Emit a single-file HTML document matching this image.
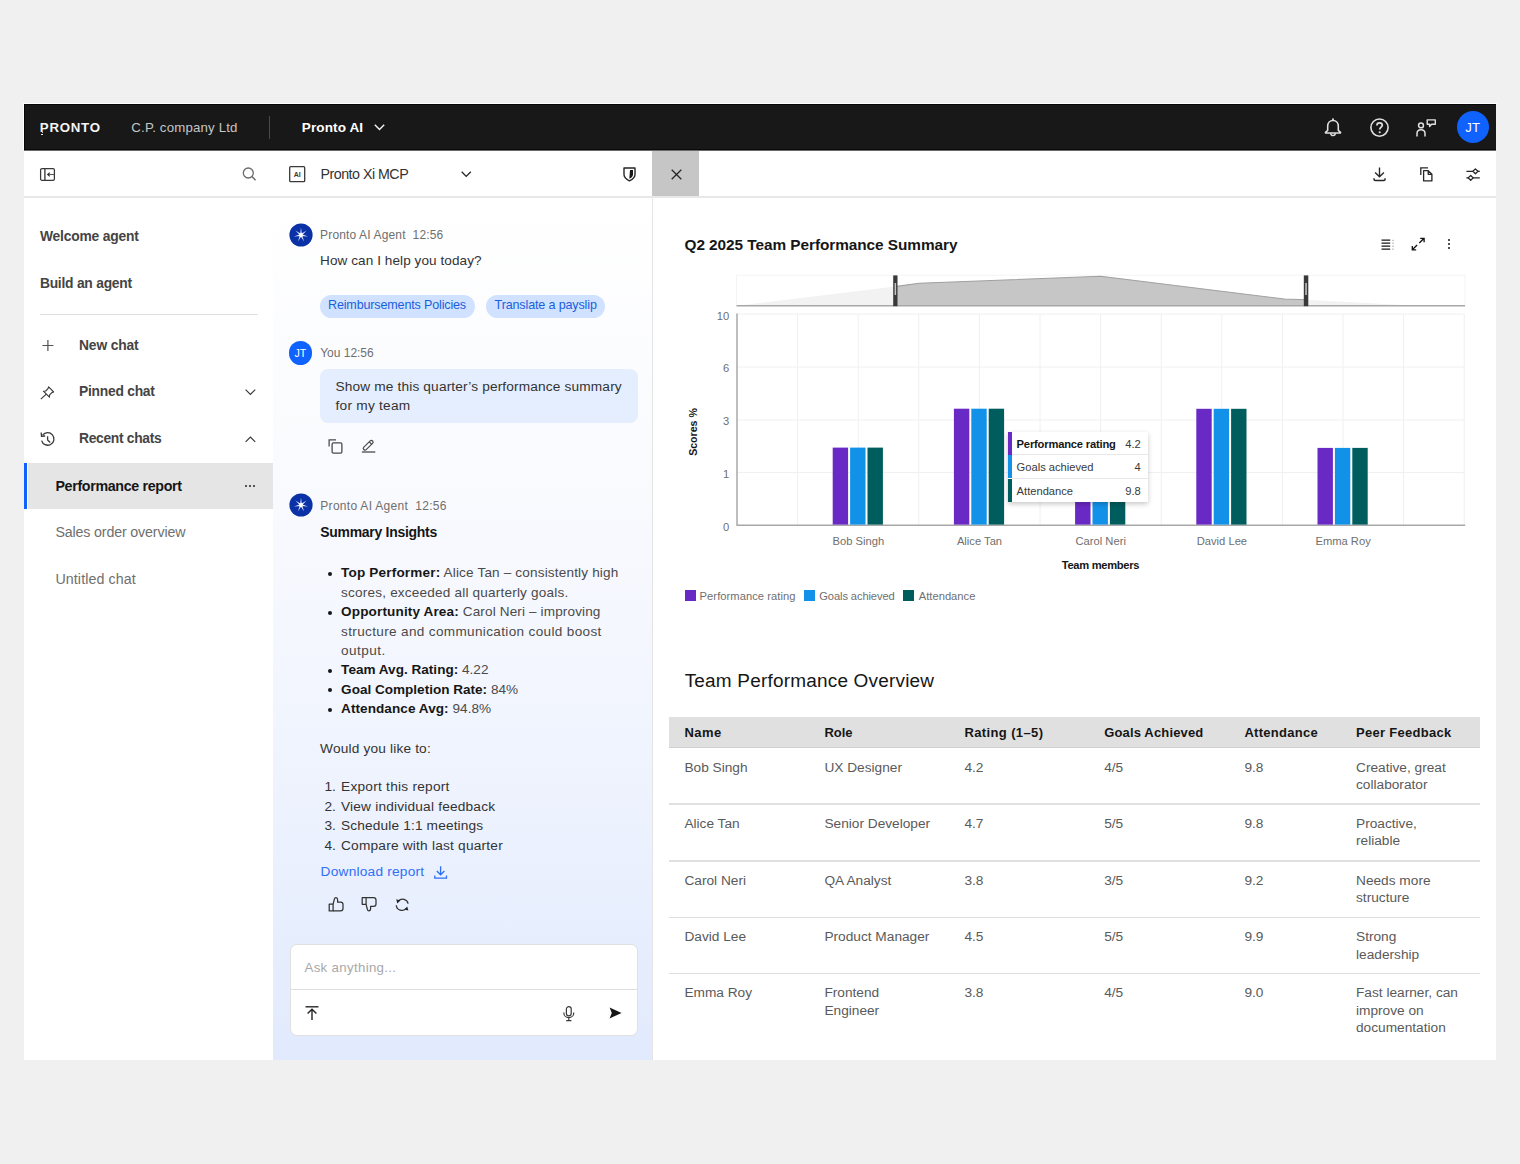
<!DOCTYPE html>
<html><head><meta charset="utf-8"><title>Pronto AI</title>
<style>
html,body{margin:0;padding:0;}
body{width:1520px;height:1164px;background:#f0f0f0;position:relative;overflow:hidden;font-family:"Liberation Sans",sans-serif;}
.t{position:absolute;white-space:nowrap;}
.r{position:absolute;}
svg.r{overflow:visible;}
</style></head><body>
<div class="r" style="left:24px;top:104px;width:1472px;height:956px;background:#ffffff;"></div>
<div class="r" style="left:23px;top:103px;width:1474px;height:1px;background:#ffffff;"></div>
<div class="r" style="left:23px;top:103px;width:1px;height:47px;background:#ffffff;"></div>
<div class="r" style="left:24px;top:104px;width:1472px;height:46px;background:#181818;"></div>
<div class="r" style="left:24px;top:104px;width:1472px;height:1px;background:#070707;"></div>
<div class="r" style="left:24px;top:149px;width:1472px;height:1px;background:#0a0a0a;"></div>
<div class="r" style="left:24px;top:150px;width:1472px;height:1px;background:#6a6a6a;"></div>
<div class="r" style="left:24px;top:104px;width:1px;height:46px;background:#070707;"></div>
<div class="t" style="left:39.80px;top:121.07px;font-size:13.27px;line-height:13.27px;color:#f4f4f4;font-weight:700;letter-spacing:0.740px;">PRONTO</div>
<div class="r" style="left:41.5px;top:132px;width:1.5px;height:1px;background:#bdbdbd;"></div>
<div class="r" style="left:41.2px;top:133.6px;width:2.1999999999999957px;height:1.8000000000000114px;background:#e8e8e8;"></div>
<div class="t" style="left:131.30px;top:120.77px;font-size:13.27px;line-height:13.27px;color:#c6c6c6;letter-spacing:0.160px;">C.P. company Ltd</div>
<div class="r" style="left:269px;top:116px;width:1.3000000000000114px;height:22.5px;background:#4a4a4a;"></div>
<div class="t" style="left:301.80px;top:120.93px;font-size:13.55px;line-height:13.55px;color:#ffffff;font-weight:700;letter-spacing:0.100px;">Pronto AI</div>
<svg class="r" style="left:374px;top:124px;" width="11" height="7" viewBox="0 0 11 7"><path d="M0.8 0.8 L5.5 5.6 L10.2 0.8" fill="none" stroke="#f4f4f4" stroke-width="1.4"/></svg>
<svg class="r" style="left:1323.5px;top:118px;" width="18" height="19" viewBox="0 0 18 19"><circle cx="9" cy="1.3" r="1" fill="#e0e0e0"/><path d="M3.7 12.4 L3.7 8.3 C3.7 4.7 6 2.5 9 2.5 C12 2.5 14.3 4.7 14.3 8.3 L14.3 12.4 L16.5 14.4 L16.5 15 L1.5 15 L1.5 14.4 Z" fill="none" stroke="#e0e0e0" stroke-width="1.55" stroke-linejoin="round"/><path d="M6.7 15.3 A2.3 2.3 0 0 0 11.3 15.3" fill="none" stroke="#e0e0e0" stroke-width="1.5"/></svg>
<svg class="r" style="left:1369.5px;top:118px;" width="20" height="20" viewBox="0 0 20 20"><circle cx="9.5" cy="9.6" r="8.6" fill="none" stroke="#e0e0e0" stroke-width="1.6"/><path d="M6.9 7.4 C6.9 5.7 8 4.8 9.6 4.8 C11.2 4.8 12.3 5.8 12.3 7.3 C12.3 9.1 9.7 9.4 9.7 11.6" fill="none" stroke="#e0e0e0" stroke-width="1.7"/><circle cx="9.7" cy="14.3" r="1.05" fill="#e0e0e0"/></svg>
<svg class="r" style="left:1416px;top:119px;" width="21" height="18" viewBox="0 0 21 18"><circle cx="5" cy="6.4" r="2.45" fill="none" stroke="#e0e0e0" stroke-width="1.5"/><path d="M1 17.4 L1 14.6 C1 12.1 2.8 10.7 5 10.7 C7.2 10.7 9 12.1 9 14.6 L9 17.4" fill="none" stroke="#e0e0e0" stroke-width="1.5"/><path d="M11.2 0.9 L19.3 0.9 L19.3 5.3 L15.6 5.3 L13.6 7.4 L13.6 5.3 L11.2 5.3 Z" fill="none" stroke="#e0e0e0" stroke-width="1.4" stroke-linejoin="round"/></svg>
<div class="r" style="left:1456.5px;top:111px;width:32px;height:32px;border-radius:50%;background:#0f62fe;"></div>
<div class="t" style="left:1465.20px;top:120.89px;font-size:13.13px;line-height:13.13px;color:#ffffff;letter-spacing:0.200px;">JT</div>
<div class="r" style="left:24px;top:196px;width:1472px;height:2px;background:#e8e8e8;"></div>
<div class="r" style="left:651.5px;top:198px;width:1.5px;height:862px;background:#e4e4e4;"></div>
<div class="r" style="left:652px;top:151px;width:47px;height:45px;background:#c6c6c6;"></div>
<svg class="r" style="left:670.5px;top:168.5px;" width="11" height="11" viewBox="0 0 11 11"><path d="M0.7 0.7 L10.3 10.3 M10.3 0.7 L0.7 10.3" stroke="#262626" stroke-width="1.3"/></svg>
<svg class="r" style="left:40px;top:167.5px;" width="15" height="13" viewBox="0 0 15 13"><rect x="0.6" y="0.6" width="13.8" height="11.7" rx="1.4" fill="none" stroke="#393939" stroke-width="1.25"/><path d="M4.9 0.6 L4.9 12.3" stroke="#393939" stroke-width="1.35"/><path d="M6.9 6.5 L9.7 3.9 L9.7 9.1 Z" fill="#2a2a2a"/><path d="M9.3 6.5 L14 6.5" stroke="#5a5a5a" stroke-width="1.1"/></svg>
<svg class="r" style="left:242px;top:166.5px;" width="15" height="14" viewBox="0 0 15 14"><circle cx="6.3" cy="6" r="5" fill="none" stroke="#6a6a6a" stroke-width="1.3"/><path d="M9.9 9.6 L13.6 13.2" stroke="#6a6a6a" stroke-width="1.4"/></svg>
<svg class="r" style="left:288.5px;top:166px;" width="16.5" height="16.5" viewBox="0 0 16.5 16.5"><rect x="0.7" y="0.7" width="15" height="15" rx="1" fill="none" stroke="#393939" stroke-width="1.3"/><text x="8.2" y="11" font-family="Liberation Sans" font-weight="700" font-size="7" text-anchor="middle" fill="#393939">AI</text></svg>
<div class="t" style="left:320.50px;top:166.94px;font-size:14.25px;line-height:14.25px;color:#333333;letter-spacing:-0.508px;">Pronto Xi MCP</div>
<svg class="r" style="left:461px;top:171px;" width="10.5" height="6.5" viewBox="0 0 10.5 6.5"><path d="M0.7 0.7 L5.2 5.4 L9.8 0.7" fill="none" stroke="#262626" stroke-width="1.3"/></svg>
<svg class="r" style="left:623px;top:166.5px;" width="13" height="14.5" viewBox="0 0 13 14.5"><path d="M1 1 L12 1 L12 7.5 C12 10.8 9 12.6 6.5 13.8 C4 12.6 1 10.8 1 7.5 Z" fill="none" stroke="#262626" stroke-width="1.4" stroke-linejoin="round"/><path d="M7 3 L10 3 L10 7.5 C10 9.5 8.5 10.7 6.3 11.8 Z" fill="#161616"/></svg>
<svg class="r" style="left:1372.5px;top:167px;" width="13.5" height="14.5" viewBox="0 0 13.5 14.5"><path d="M6.5 0.4 L6.5 9.6 M2.1 5.6 L6.5 9.8 L10.9 5.6" fill="none" stroke="#262626" stroke-width="1.35"/><path d="M1 11.3 L1 12.2 Q1 13.4 2.4 13.4 L10.7 13.4 Q12.1 13.4 12.1 12.2 L12.1 11.3" fill="none" stroke="#262626" stroke-width="1.45"/></svg>
<svg class="r" style="left:1419.5px;top:166.5px;" width="13" height="15" viewBox="0 0 13 15"><path d="M0.8 8 L0.8 0.8 L8 0.8" fill="none" stroke="#262626" stroke-width="1.3"/><path d="M3.6 3.6 L8.2 3.6 L11.9 7.3 L11.9 13.9 L3.6 13.9 Z M8.2 3.6 L8.2 7.3 L11.9 7.3" fill="none" stroke="#262626" stroke-width="1.3" stroke-linejoin="round"/></svg>
<svg class="r" style="left:1465.5px;top:167.5px;" width="14.5" height="13" viewBox="0 0 14.5 13"><path d="M0.4 3.3 L13.8 3.3 M0.4 9.9 L13.8 9.9" stroke="#262626" stroke-width="1.35"/><path d="M6.9 3.3 L9.4 0.9 L11.9 3.3 L9.4 5.7 Z" fill="#fff" stroke="#262626" stroke-width="1.3" stroke-linejoin="round"/><path d="M2.2 9.9 L4.7 7.5 L7.2 9.9 L4.7 12.3 Z" fill="#fff" stroke="#262626" stroke-width="1.3" stroke-linejoin="round"/></svg>
<div class="t" style="left:39.90px;top:229.70px;font-size:13.83px;line-height:13.83px;color:#444444;font-weight:700;letter-spacing:-0.183px;">Welcome agent</div>
<div class="t" style="left:39.90px;top:276.50px;font-size:13.83px;line-height:13.83px;color:#444444;font-weight:700;letter-spacing:-0.231px;">Build an agent</div>
<div class="r" style="left:40px;top:313.5px;width:218px;height:1.5px;background:#e0e0e0;"></div>
<div class="t" style="left:79.00px;top:338.80px;font-size:13.83px;line-height:13.83px;color:#444444;font-weight:700;letter-spacing:-0.143px;">New chat</div>
<div class="t" style="left:79.00px;top:384.90px;font-size:13.83px;line-height:13.83px;color:#444444;font-weight:700;letter-spacing:-0.250px;">Pinned chat</div>
<div class="t" style="left:79.00px;top:432.00px;font-size:13.83px;line-height:13.83px;color:#444444;font-weight:700;letter-spacing:-0.309px;">Recent chats</div>
<svg class="r" style="left:41.5px;top:340px;" width="12" height="11" viewBox="0 0 12 11"><path d="M5.9 0 L5.9 11 M0.4 5.5 L11.4 5.5" stroke="#525252" stroke-width="1.2"/></svg>
<svg class="r" style="left:40px;top:385.5px;" width="14.5" height="13.5" viewBox="0 0 14.5 13.5"><path d="M8.6 0.9 L13.6 5.9 L11.9 6.6 L9.6 8.9 L9.4 11.2 L3.4 5.2 L5.7 5 L8 2.7 Z" fill="none" stroke="#393939" stroke-width="1.15" stroke-linejoin="round"/><path d="M6.3 8.1 L0.8 13.1" stroke="#393939" stroke-width="1.15"/></svg>
<svg class="r" style="left:244.5px;top:389px;" width="11" height="6.5" viewBox="0 0 11 6.5"><path d="M0.6 0.6 L5.4 5.4 L10.2 0.6" fill="none" stroke="#393939" stroke-width="1.2"/></svg>
<svg class="r" style="left:244.5px;top:436px;" width="11" height="6.5" viewBox="0 0 11 6.5"><path d="M0.6 5.8 L5.4 1 L10.2 5.8" fill="none" stroke="#393939" stroke-width="1.2"/></svg>
<svg class="r" style="left:39.5px;top:431.5px;" width="15.5" height="15" viewBox="0 0 15.5 15"><path d="M2.6 3.2 A6.3 6.3 0 1 1 1.6 8.6" fill="none" stroke="#393939" stroke-width="1.3"/><path d="M1.2 0.5 L1.5 4.2 L5.2 4" fill="none" stroke="#393939" stroke-width="1.3"/><path d="M7.6 4.2 L7.6 8 L10.2 10.4" fill="none" stroke="#393939" stroke-width="1.3"/></svg>
<div class="r" style="left:24px;top:462.5px;width:3.1999999999999993px;height:46.5px;background:#0f62fe;"></div>
<div class="r" style="left:28px;top:462.5px;width:245px;height:46.5px;background:#e5e5e5;"></div>
<div class="t" style="left:55.40px;top:478.84px;font-size:14.25px;line-height:14.25px;color:#161616;font-weight:700;letter-spacing:-0.329px;">Performance report</div>
<div class="r" style="left:245.30px;top:484.7px;width:2.2px;height:2.2px;border-radius:50%;background:#262626"></div>
<div class="r" style="left:249.10px;top:484.7px;width:2.2px;height:2.2px;border-radius:50%;background:#262626"></div>
<div class="r" style="left:252.90px;top:484.7px;width:2.2px;height:2.2px;border-radius:50%;background:#262626"></div>
<div class="t" style="left:55.40px;top:525.44px;font-size:14.25px;line-height:14.25px;color:#6f6f6f;letter-spacing:-0.158px;">Sales order overview</div>
<div class="t" style="left:55.40px;top:571.54px;font-size:14.25px;line-height:14.25px;color:#6f6f6f;letter-spacing:0.100px;">Untitled chat</div>
<div class="r" style="left:273px;top:198px;width:378.5px;height:862px;background:linear-gradient(to bottom,#ffffff 0%,#f9fafe 35%,#f1f5fe 60%,#e1eafd 100%);"></div>
<svg class="r" style="left:288.7px;top:222.8px;" width="24" height="24" viewBox="0 0 24 24"><circle cx="12" cy="12" r="11.6" fill="#0a31a6"/><path d="M13.00 12.00 L12.00 4.80 L11.00 12.00 Z" fill="#dfe6ff"/><path d="M12.62 12.78 L17.63 7.51 L11.38 11.22 Z" fill="#dfe6ff"/><path d="M11.78 12.97 L19.02 13.60 L12.22 11.03 Z" fill="#dfe6ff"/><path d="M11.10 12.43 L15.12 18.49 L12.90 11.57 Z" fill="#dfe6ff"/><path d="M11.10 11.57 L8.88 18.49 L12.90 12.43 Z" fill="#dfe6ff"/><path d="M11.78 11.03 L4.98 13.60 L12.22 12.97 Z" fill="#dfe6ff"/><path d="M12.62 11.22 L6.37 7.51 L11.38 12.78 Z" fill="#dfe6ff"/><circle cx="12" cy="12" r="1.9" fill="#ffffff"/></svg>
<div class="t" style="left:320.10px;top:228.53px;font-size:12.01px;line-height:12.01px;color:#6f6f6f;letter-spacing:0.143px;">Pronto AI Agent  12:56</div>
<div class="t" style="left:320.10px;top:254.23px;font-size:13.55px;line-height:13.55px;color:#333333;letter-spacing:0.075px;">How can I help you today?</div>
<div class="r" style="left:319.8px;top:294.8px;width:155px;height:23.2px;border-radius:12px;background:#d0e2ff;"></div>
<div class="r" style="left:486.4px;top:294.8px;width:119px;height:23.2px;border-radius:12px;background:#d0e2ff;"></div>
<div class="t" style="left:328.00px;top:299.26px;font-size:12.57px;line-height:12.57px;color:#1a5fdc;letter-spacing:-0.164px;">Reimbursements Policies</div>
<div class="t" style="left:494.60px;top:299.26px;font-size:12.57px;line-height:12.57px;color:#1a5fdc;letter-spacing:-0.150px;">Translate a payslip</div>
<div class="r" style="left:288.5px;top:341px;width:23.6px;height:23.6px;border-radius:50%;background:#0f62fe;"></div>
<div class="t" style="left:294.60px;top:348.41px;font-size:10.61px;line-height:10.61px;color:#ffffff;letter-spacing:-0.200px;">JT</div>
<div class="t" style="left:320.20px;top:347.23px;font-size:12.01px;line-height:12.01px;color:#6f6f6f;letter-spacing:-0.013px;">You 12:56</div>
<div class="r" style="left:320.2px;top:368.6px;width:318px;height:54.5px;border-radius:8px;background:#e5eefe;"></div>
<div class="t" style="left:335.50px;top:379.91px;font-size:13.69px;line-height:13.69px;color:#333333;letter-spacing:0.146px;">Show me this quarter’s performance summary</div>
<div class="t" style="left:335.50px;top:398.91px;font-size:13.69px;line-height:13.69px;color:#333333;letter-spacing:0.240px;">for my team</div>
<svg class="r" style="left:328px;top:439px;" width="15" height="15" viewBox="0 0 15 15"><path d="M1.1 7.6 L1.1 0.9 L8 0.9" fill="none" stroke="#4a4a4a" stroke-width="1.25"/><rect x="4.1" y="3.9" width="9.8" height="10.2" rx="1.4" fill="none" stroke="#4a4a4a" stroke-width="1.3"/></svg>
<svg class="r" style="left:361px;top:439px;" width="15" height="15" viewBox="0 0 15 15"><g transform="rotate(-44 7.2 6.25)"><rect x="1.05" y="4.55" width="12.3" height="3.4" rx="1.7" fill="none" stroke="#4a4a4a" stroke-width="1.2"/><path d="M10.4 4.55 L10.4 7.95" stroke="#4a4a4a" stroke-width="1.1"/></g><path d="M0.9 13 L14.3 13" stroke="#4a4a4a" stroke-width="1.3"/></svg>
<svg class="r" style="left:288.9px;top:493.3px;" width="24" height="24" viewBox="0 0 24 24"><circle cx="12" cy="12" r="11.6" fill="#0a31a6"/><path d="M13.00 12.00 L12.00 4.80 L11.00 12.00 Z" fill="#dfe6ff"/><path d="M12.62 12.78 L17.63 7.51 L11.38 11.22 Z" fill="#dfe6ff"/><path d="M11.78 12.97 L19.02 13.60 L12.22 11.03 Z" fill="#dfe6ff"/><path d="M11.10 12.43 L15.12 18.49 L12.90 11.57 Z" fill="#dfe6ff"/><path d="M11.10 11.57 L8.88 18.49 L12.90 12.43 Z" fill="#dfe6ff"/><path d="M11.78 11.03 L4.98 13.60 L12.22 12.97 Z" fill="#dfe6ff"/><path d="M12.62 11.22 L6.37 7.51 L11.38 12.78 Z" fill="#dfe6ff"/><circle cx="12" cy="12" r="1.9" fill="#ffffff"/></svg>
<div class="t" style="left:320.30px;top:499.73px;font-size:12.01px;line-height:12.01px;color:#6f6f6f;letter-spacing:0.290px;">Pronto AI Agent  12:56</div>
<div class="t" style="left:320.30px;top:525.78px;font-size:13.97px;line-height:13.97px;color:#161616;font-weight:700;letter-spacing:-0.280px;">Summary Insights</div>
<div class="r" style="left:328.2px;top:571.80px;width:4px;height:4px;border-radius:50%;background:#161616"></div>
<div class="t" style="left:341.10px;top:566.33px;font-size:13.55px;line-height:13.55px;color:#4a4a4a;letter-spacing:0.171px;"><span style="color:#161616;font-weight:700;">Top Performer:</span><span style="color:#4a4a4a;"> Alice Tan – consistently high</span></div>
<div class="t" style="left:341.10px;top:585.75px;font-size:13.55px;line-height:13.55px;color:#4a4a4a;letter-spacing:0.201px;"><span style="color:#4a4a4a;">scores, exceeded all quarterly goals.</span></div>
<div class="r" style="left:328.2px;top:610.64px;width:4px;height:4px;border-radius:50%;background:#161616"></div>
<div class="t" style="left:341.10px;top:605.17px;font-size:13.55px;line-height:13.55px;color:#4a4a4a;letter-spacing:0.138px;"><span style="color:#161616;font-weight:700;">Opportunity Area:</span><span style="color:#4a4a4a;"> Carol Neri – improving</span></div>
<div class="t" style="left:341.10px;top:624.59px;font-size:13.55px;line-height:13.55px;color:#4a4a4a;letter-spacing:0.348px;"><span style="color:#4a4a4a;">structure and communication could boost</span></div>
<div class="t" style="left:341.10px;top:644.01px;font-size:13.55px;line-height:13.55px;color:#4a4a4a;letter-spacing:0.461px;"><span style="color:#4a4a4a;">output.</span></div>
<div class="r" style="left:328.2px;top:668.90px;width:4px;height:4px;border-radius:50%;background:#161616"></div>
<div class="t" style="left:341.10px;top:663.43px;font-size:13.55px;line-height:13.55px;color:#4a4a4a;letter-spacing:0.013px;"><span style="color:#161616;font-weight:700;">Team Avg. Rating:</span><span style="color:#4a4a4a;"> 4.22</span></div>
<div class="r" style="left:328.2px;top:688.32px;width:4px;height:4px;border-radius:50%;background:#161616"></div>
<div class="t" style="left:341.10px;top:682.85px;font-size:13.55px;line-height:13.55px;color:#4a4a4a;letter-spacing:0.001px;"><span style="color:#161616;font-weight:700;">Goal Completion Rate:</span><span style="color:#4a4a4a;"> 84%</span></div>
<div class="r" style="left:328.2px;top:707.74px;width:4px;height:4px;border-radius:50%;background:#161616"></div>
<div class="t" style="left:341.10px;top:702.27px;font-size:13.55px;line-height:13.55px;color:#4a4a4a;letter-spacing:0.061px;"><span style="color:#161616;font-weight:700;">Attendance Avg:</span><span style="color:#4a4a4a;"> 94.8%</span></div>
<div class="t" style="left:320.10px;top:742.11px;font-size:13.69px;line-height:13.69px;color:#333333;letter-spacing:0.165px;">Would you like to:</div>
<div class="t" style="left:324.40px;top:780.41px;font-size:13.69px;line-height:13.69px;color:#333333;">1.</div>
<div class="t" style="left:341.00px;top:780.41px;font-size:13.69px;line-height:13.69px;color:#333333;letter-spacing:0.247px;">Export this report</div>
<div class="t" style="left:324.40px;top:799.88px;font-size:13.69px;line-height:13.69px;color:#333333;">2.</div>
<div class="t" style="left:341.00px;top:799.88px;font-size:13.69px;line-height:13.69px;color:#333333;letter-spacing:0.191px;">View individual feedback</div>
<div class="t" style="left:324.40px;top:819.35px;font-size:13.69px;line-height:13.69px;color:#333333;">3.</div>
<div class="t" style="left:341.00px;top:819.35px;font-size:13.69px;line-height:13.69px;color:#333333;letter-spacing:0.145px;">Schedule 1:1 meetings</div>
<div class="t" style="left:324.40px;top:838.82px;font-size:13.69px;line-height:13.69px;color:#333333;">4.</div>
<div class="t" style="left:341.00px;top:838.82px;font-size:13.69px;line-height:13.69px;color:#333333;letter-spacing:0.208px;">Compare with last quarter</div>
<div class="t" style="left:320.60px;top:865.31px;font-size:13.69px;line-height:13.69px;color:#2f6ff6;letter-spacing:0.221px;">Download report</div>
<svg class="r" style="left:434px;top:866px;" width="13.5" height="13" viewBox="0 0 13.5 13"><path d="M6.6 0.3 L6.6 8.6 M2.8 5 L6.6 8.8 L10.4 5" fill="none" stroke="#2f6ff6" stroke-width="1.3"/><path d="M0.8 9.6 L0.8 12.1 L12.5 12.1 L12.5 9.6" fill="none" stroke="#2f6ff6" stroke-width="1.3"/></svg>
<svg class="r" style="left:327.5px;top:897px;" width="16" height="14.5" viewBox="0 0 16 14.5"><rect x="1.2" y="7.2" width="3.9" height="6.7" fill="none" stroke="#333" stroke-width="1.25" stroke-linejoin="round"/><path d="M5.1 13.9 L12.6 13.9 C14 13.9 15 12.9 15 11.5 L15 7.5 C15 6.2 14 5.2 12.7 5.2 L9.6 5.2 L9.6 3 C9.6 1.4 8.6 0.6 7.9 0.6 C7.1 0.6 6.6 1.2 6.3 2.4 L5.1 7.2" fill="none" stroke="#333" stroke-width="1.25" stroke-linejoin="round"/></svg>
<svg class="r" style="left:361px;top:897px;" width="16" height="14.5" viewBox="0 0 16 14.5"><rect x="1.2" y="0.6" width="3.9" height="6.7" fill="none" stroke="#333" stroke-width="1.25" stroke-linejoin="round"/><path d="M5.1 0.6 L12.6 0.6 C14 0.6 15 1.6 15 3 L15 7 C15 8.3 14 9.3 12.7 9.3 L9.6 9.3 L9.6 11.5 C9.6 13.1 8.6 13.9 7.9 13.9 C7.1 13.9 6.6 13.3 6.3 12.1 L5.1 7.3" fill="none" stroke="#333" stroke-width="1.25" stroke-linejoin="round"/></svg>
<svg class="r" style="left:394.5px;top:897.5px;" width="14.5" height="14" viewBox="0 0 14.5 14"><path d="M3.4 3.0 A5.6 5.6 0 0 1 13.1 5.6" fill="none" stroke="#333" stroke-width="1.3"/><path d="M1.2 1.3 L5.2 2.6 L2.4 5.4 Z" fill="#222"/><path d="M1.3 7.2 A5.6 5.6 0 0 0 11.0 10.6" fill="none" stroke="#333" stroke-width="1.3"/><path d="M13.4 12.6 L9.4 11.4 L12.2 8.6 Z" fill="#222"/></svg>
<div class="r" style="left:289.5px;top:943.8px;width:346px;height:90.5px;border-radius:7px;background:#ffffff;border:1px solid #e0e0e0;"></div>
<div class="r" style="left:290.5px;top:989px;width:346.0px;height:1.2000000000000455px;background:#e0e0e0;"></div>
<div class="t" style="left:304.50px;top:960.77px;font-size:13.27px;line-height:13.27px;color:#a8a8a8;letter-spacing:0.321px;">Ask anything...</div>
<svg class="r" style="left:305px;top:1006px;" width="14" height="14.5" viewBox="0 0 14 14.5"><path d="M0.5 0.8 L13.5 0.8" stroke="#262626" stroke-width="1.4"/><path d="M7 14 L7 3.4 M2.6 7.6 L7 3.2 L11.4 7.6" fill="none" stroke="#262626" stroke-width="1.4"/></svg>
<svg class="r" style="left:562.5px;top:1005.5px;" width="11.5" height="15.5" viewBox="0 0 11.5 15.5"><rect x="3.4" y="0.7" width="4.8" height="9.2" rx="2.4" fill="none" stroke="#393939" stroke-width="1.2"/><path d="M0.8 6.4 C0.8 9.6 3 11.6 5.8 11.6 C8.6 11.6 10.8 9.6 10.8 6.4 M5.8 11.6 L5.8 14.6 M3.2 14.6 L8.4 14.6" fill="none" stroke="#393939" stroke-width="1.2"/></svg>
<svg class="r" style="left:608.5px;top:1007px;" width="13" height="12" viewBox="0 0 13 12"><path d="M0.6 0.6 L12.6 6 L0.6 11.4 L2.8 6 Z" fill="#161616"/></svg>
<div class="t" style="left:684.50px;top:237.10px;font-size:15.36px;line-height:15.36px;color:#161616;font-weight:700;letter-spacing:-0.052px;">Q2 2025 Team Performance Summary</div>
<svg class="r" style="left:1380.5px;top:238.5px;" width="14" height="12" viewBox="0 0 14 12"><g stroke="#161616" stroke-width="1.2"><path d="M0.5 1.2 L9.2 1.2 M0.5 4.1 L9.2 4.1 M0.5 7.1 L9.2 7.1 M0.5 10.1 L9.2 10.1"/></g><g fill="#6f6f6f"><circle cx="12" cy="1.2" r="0.55"/><circle cx="12" cy="4.1" r="0.55"/><circle cx="12" cy="7.1" r="0.55"/><circle cx="12" cy="10.1" r="0.55"/></g></svg>
<svg class="r" style="left:1405px;top:232px;" width="27" height="24" viewBox="0 0 27 24"><path d="M15.2 6.3 L19.1 6.3 L19.1 10.2 M19.1 6.3 L14.3 11.1 M7.3 14 L7.3 17.8 L11.2 17.8 M7.3 17.8 L12.1 13" fill="none" stroke="#161616" stroke-width="1.35"/></svg>
<div class="r" style="left:1448.2px;top:239.1px;width:2.2px;height:2.2px;border-radius:50%;background:#161616"></div>
<div class="r" style="left:1448.2px;top:243.0px;width:2.2px;height:2.2px;border-radius:50%;background:#161616"></div>
<div class="r" style="left:1448.2px;top:246.9px;width:2.2px;height:2.2px;border-radius:50%;background:#161616"></div>
<svg class="r" style="left:0px;top:0px;pointer-events:none;" width="1520" height="1164" viewBox="0 0 1520 1164"><rect x="736.5" y="275.2" width="728.5" height="30.6" fill="#ffffff" stroke="#f4f4f4" stroke-width="1"/><path d="M736.5 305.8 L895 286.6 L895 305.8 Z" fill="#f2f2f2"/><path d="M1306 299.8 L1412 305.5 L1306 305.8 Z" fill="#f2f2f2"/><path d="M895 286.6 L919 283.3 L1100.7 276.3 L1284.5 299 L1306 299.8 L1306 305.8 L895 305.8 Z" fill="#c6c6c6"/><path d="M895 286.6 L919 283.3 L1100.7 276.3 L1284.5 299 L1306 299.8" fill="none" stroke="#a0a0a0" stroke-width="1.1"/><path d="M736.5 305.8 L1465 305.8" stroke="#a8a8a8" stroke-width="1.6"/><rect x="893.2" y="275.4" width="4.3" height="30.8" fill="#393939"/><rect x="894.6" y="283" width="1.5" height="12" fill="#c6c6c6"/><rect x="1303.8" y="275.4" width="4.5" height="30.8" fill="#393939"/><rect x="1305.3" y="283" width="1.5" height="12" fill="#c6c6c6"/></svg>
<svg class="r" style="left:0px;top:0px;pointer-events:none;" width="1520" height="1164" viewBox="0 0 1520 1164"><path d="M797.60 314 L797.60 525" stroke="#f0f0f0" stroke-width="1"/><path d="M858.20 314 L858.20 525" stroke="#f0f0f0" stroke-width="1"/><path d="M918.80 314 L918.80 525" stroke="#f0f0f0" stroke-width="1"/><path d="M979.40 314 L979.40 525" stroke="#f0f0f0" stroke-width="1"/><path d="M1040.00 314 L1040.00 525" stroke="#f0f0f0" stroke-width="1"/><path d="M1100.60 314 L1100.60 525" stroke="#f0f0f0" stroke-width="1"/><path d="M1161.20 314 L1161.20 525" stroke="#f0f0f0" stroke-width="1"/><path d="M1221.80 314 L1221.80 525" stroke="#f0f0f0" stroke-width="1"/><path d="M1282.40 314 L1282.40 525" stroke="#f0f0f0" stroke-width="1"/><path d="M1343.00 314 L1343.00 525" stroke="#f0f0f0" stroke-width="1"/><path d="M1403.60 314 L1403.60 525" stroke="#f0f0f0" stroke-width="1"/><path d="M1464.20 314 L1464.20 525" stroke="#f0f0f0" stroke-width="1"/><path d="M737 314.1 L1464.5 314.1" stroke="#f0f0f0" stroke-width="1"/><path d="M737 367.0 L1464.5 367.0" stroke="#f0f0f0" stroke-width="1"/><path d="M737 420.0 L1464.5 420.0" stroke="#f0f0f0" stroke-width="1"/><path d="M737 472.5 L1464.5 472.5" stroke="#f0f0f0" stroke-width="1"/><path d="M737 313.5 L737 525.3" stroke="#a8a8a8" stroke-width="1.5"/><path d="M736.5 525.3 L1465.2 525.3" stroke="#a8a8a8" stroke-width="1.6"/><rect x="832.70" y="447.6" width="15.4" height="77.0" fill="#6929c4"/><rect x="850.10" y="447.6" width="15.4" height="77.0" fill="#1192e8"/><rect x="867.50" y="447.6" width="15.4" height="77.0" fill="#005d5d"/><rect x="953.90" y="408.7" width="15.4" height="115.9" fill="#6929c4"/><rect x="971.30" y="408.7" width="15.4" height="115.9" fill="#1192e8"/><rect x="988.70" y="408.7" width="15.4" height="115.9" fill="#005d5d"/><rect x="1075.10" y="440" width="15.4" height="84.6" fill="#6929c4"/><rect x="1092.50" y="440" width="15.4" height="84.6" fill="#1192e8"/><rect x="1109.90" y="440" width="15.4" height="84.6" fill="#005d5d"/><rect x="1196.30" y="408.8" width="15.4" height="115.8" fill="#6929c4"/><rect x="1213.70" y="408.8" width="15.4" height="115.8" fill="#1192e8"/><rect x="1231.10" y="408.8" width="15.4" height="115.8" fill="#005d5d"/><rect x="1317.50" y="447.9" width="15.4" height="76.7" fill="#6929c4"/><rect x="1334.90" y="447.9" width="15.4" height="76.7" fill="#1192e8"/><rect x="1352.30" y="447.9" width="15.4" height="76.7" fill="#005d5d"/></svg>
<div class="t" style="right:790.8px;top:310.70px;font-size:11.2px;line-height:11.2px;color:#6f6f6f;">10</div>
<div class="t" style="right:790.8px;top:363.30px;font-size:11.2px;line-height:11.2px;color:#6f6f6f;">6</div>
<div class="t" style="right:790.8px;top:415.80px;font-size:11.2px;line-height:11.2px;color:#6f6f6f;">3</div>
<div class="t" style="right:790.8px;top:469.00px;font-size:11.2px;line-height:11.2px;color:#6f6f6f;">1</div>
<div class="t" style="right:790.8px;top:521.90px;font-size:11.2px;line-height:11.2px;color:#6f6f6f;">0</div>
<div class="t" style="left:692.7px;top:431.8px;font-size:10.6px;line-height:10.6px;font-weight:700;color:#161616;transform:translate(-50%,-50%) rotate(-90deg);">Scores %</div>
<div class="t" style="left:858.3px;top:536.42px;font-size:11.2px;line-height:11.2px;color:#6f6f6f;transform:translateX(-50%);">Bob Singh</div>
<div class="t" style="left:979.5px;top:536.42px;font-size:11.2px;line-height:11.2px;color:#6f6f6f;transform:translateX(-50%);">Alice Tan</div>
<div class="t" style="left:1100.7px;top:536.42px;font-size:11.2px;line-height:11.2px;color:#6f6f6f;transform:translateX(-50%);">Carol Neri</div>
<div class="t" style="left:1221.9px;top:536.42px;font-size:11.2px;line-height:11.2px;color:#6f6f6f;transform:translateX(-50%);">David Lee</div>
<div class="t" style="left:1343.1px;top:536.42px;font-size:11.2px;line-height:11.2px;color:#6f6f6f;transform:translateX(-50%);">Emma Roy</div>
<div class="t" style="left:1061.80px;top:560.04px;font-size:11.17px;line-height:11.17px;color:#161616;font-weight:700;letter-spacing:-0.309px;">Team members</div>
<div class="r" style="left:684.5px;top:590px;width:11.0px;height:11px;background:#6929c4;"></div>
<div class="t" style="left:699.60px;top:590.64px;font-size:11.17px;line-height:11.17px;color:#6f6f6f;letter-spacing:0.059px;">Performance rating</div>
<div class="r" style="left:803.8px;top:590px;width:11.0px;height:11px;background:#1192e8;"></div>
<div class="t" style="left:819.30px;top:590.64px;font-size:11.17px;line-height:11.17px;color:#6f6f6f;letter-spacing:-0.115px;">Goals achieved</div>
<div class="r" style="left:903.0px;top:590px;width:11.0px;height:11px;background:#005d5d;"></div>
<div class="t" style="left:918.80px;top:590.64px;font-size:11.17px;line-height:11.17px;color:#6f6f6f;letter-spacing:0.011px;">Attendance</div>
<div class="r" style="left:1008.4px;top:431.6px;width:140px;height:70px;background:#ffffff;box-shadow:0 2px 5px rgba(0,0,0,0.22);"></div>
<div class="r" style="left:1008.4px;top:431.6px;width:3.2000000000000455px;height:23.099999999999966px;background:#6929c4;"></div>
<div class="r" style="left:1008.4px;top:455.2px;width:3.2000000000000455px;height:22.900000000000034px;background:#1192e8;"></div>
<div class="r" style="left:1008.4px;top:478.6px;width:3.2000000000000455px;height:23.0px;background:#005d5d;"></div>
<div class="r" style="left:1011.6px;top:454.3px;width:136.80000000000007px;height:1.0px;background:#e8e8e8;"></div>
<div class="r" style="left:1011.6px;top:477.7px;width:136.80000000000007px;height:1.0px;background:#e8e8e8;"></div>
<div class="t" style="left:1016.60px;top:438.74px;font-size:11.17px;line-height:11.17px;color:#161616;font-weight:700;letter-spacing:-0.176px;">Performance rating</div>
<div class="t" style="left:1016.60px;top:462.14px;font-size:11.17px;line-height:11.17px;color:#393939;">Goals achieved</div>
<div class="t" style="left:1016.60px;top:485.54px;font-size:11.17px;line-height:11.17px;color:#393939;">Attendance</div>
<div class="t" style="right:379.2px;top:438.74px;font-size:11.17px;line-height:11.17px;color:#393939;">4.2</div>
<div class="t" style="right:379.2px;top:462.14px;font-size:11.17px;line-height:11.17px;color:#393939;">4</div>
<div class="t" style="right:379.2px;top:485.54px;font-size:11.17px;line-height:11.17px;color:#393939;">9.8</div>
<div class="t" style="left:684.70px;top:670.92px;font-size:18.99px;line-height:18.99px;color:#161616;letter-spacing:0.192px;">Team Performance Overview</div>
<div class="r" style="left:668.5px;top:716.5px;width:811.5px;height:31.5px;background:#e0e0e0;"></div>
<div class="r" style="left:668.5px;top:747px;width:811.5px;height:1.2000000000000455px;background:#d0d0d0;"></div>
<div class="t" style="left:684.40px;top:726.00px;font-size:12.99px;line-height:12.99px;color:#161616;font-weight:700;letter-spacing:0.467px;">Name</div>
<div class="t" style="left:824.40px;top:726.00px;font-size:12.99px;line-height:12.99px;color:#161616;font-weight:700;">Role</div>
<div class="t" style="left:964.40px;top:726.00px;font-size:12.99px;line-height:12.99px;color:#161616;font-weight:700;letter-spacing:0.391px;">Rating (1–5)</div>
<div class="t" style="left:1104.20px;top:726.00px;font-size:12.99px;line-height:12.99px;color:#161616;font-weight:700;letter-spacing:0.162px;">Goals Achieved</div>
<div class="t" style="left:1244.40px;top:726.00px;font-size:12.99px;line-height:12.99px;color:#161616;font-weight:700;letter-spacing:0.289px;">Attendance</div>
<div class="t" style="left:1356.00px;top:726.00px;font-size:12.99px;line-height:12.99px;color:#161616;font-weight:700;letter-spacing:0.300px;">Peer Feedback</div>
<div class="t" style="left:684.40px;top:760.61px;font-size:13.69px;line-height:13.69px;color:#5a5a5a;">Bob Singh</div>
<div class="t" style="left:824.40px;top:760.61px;font-size:13.69px;line-height:13.69px;color:#5a5a5a;">UX Designer</div>
<div class="t" style="left:964.40px;top:760.61px;font-size:13.69px;line-height:13.69px;color:#5a5a5a;">4.2</div>
<div class="t" style="left:1104.20px;top:760.61px;font-size:13.69px;line-height:13.69px;color:#5a5a5a;">4/5</div>
<div class="t" style="left:1244.40px;top:760.61px;font-size:13.69px;line-height:13.69px;color:#5a5a5a;">9.8</div>
<div class="t" style="left:1356.00px;top:760.61px;font-size:13.69px;line-height:13.69px;color:#5a5a5a;">Creative, great</div>
<div class="t" style="left:1356.00px;top:778.01px;font-size:13.69px;line-height:13.69px;color:#5a5a5a;">collaborator</div>
<div class="t" style="left:684.40px;top:816.61px;font-size:13.69px;line-height:13.69px;color:#5a5a5a;">Alice Tan</div>
<div class="t" style="left:824.40px;top:816.61px;font-size:13.69px;line-height:13.69px;color:#5a5a5a;">Senior Developer</div>
<div class="t" style="left:964.40px;top:816.61px;font-size:13.69px;line-height:13.69px;color:#5a5a5a;">4.7</div>
<div class="t" style="left:1104.20px;top:816.61px;font-size:13.69px;line-height:13.69px;color:#5a5a5a;">5/5</div>
<div class="t" style="left:1244.40px;top:816.61px;font-size:13.69px;line-height:13.69px;color:#5a5a5a;">9.8</div>
<div class="t" style="left:1356.00px;top:816.61px;font-size:13.69px;line-height:13.69px;color:#5a5a5a;">Proactive,</div>
<div class="t" style="left:1356.00px;top:834.01px;font-size:13.69px;line-height:13.69px;color:#5a5a5a;">reliable</div>
<div class="r" style="left:668.5px;top:803.3px;width:811.5px;height:1.7000000000000455px;background:#e0e0e0;"></div>
<div class="t" style="left:684.40px;top:873.71px;font-size:13.69px;line-height:13.69px;color:#5a5a5a;">Carol Neri</div>
<div class="t" style="left:824.40px;top:873.71px;font-size:13.69px;line-height:13.69px;color:#5a5a5a;">QA Analyst</div>
<div class="t" style="left:964.40px;top:873.71px;font-size:13.69px;line-height:13.69px;color:#5a5a5a;">3.8</div>
<div class="t" style="left:1104.20px;top:873.71px;font-size:13.69px;line-height:13.69px;color:#5a5a5a;">3/5</div>
<div class="t" style="left:1244.40px;top:873.71px;font-size:13.69px;line-height:13.69px;color:#5a5a5a;">9.2</div>
<div class="t" style="left:1356.00px;top:873.71px;font-size:13.69px;line-height:13.69px;color:#5a5a5a;">Needs more</div>
<div class="t" style="left:1356.00px;top:891.11px;font-size:13.69px;line-height:13.69px;color:#5a5a5a;">structure</div>
<div class="r" style="left:668.5px;top:860.4px;width:811.5px;height:1.7000000000000455px;background:#e0e0e0;"></div>
<div class="t" style="left:684.40px;top:930.11px;font-size:13.69px;line-height:13.69px;color:#5a5a5a;">David Lee</div>
<div class="t" style="left:824.40px;top:930.11px;font-size:13.69px;line-height:13.69px;color:#5a5a5a;">Product Manager</div>
<div class="t" style="left:964.40px;top:930.11px;font-size:13.69px;line-height:13.69px;color:#5a5a5a;">4.5</div>
<div class="t" style="left:1104.20px;top:930.11px;font-size:13.69px;line-height:13.69px;color:#5a5a5a;">5/5</div>
<div class="t" style="left:1244.40px;top:930.11px;font-size:13.69px;line-height:13.69px;color:#5a5a5a;">9.9</div>
<div class="t" style="left:1356.00px;top:930.11px;font-size:13.69px;line-height:13.69px;color:#5a5a5a;">Strong</div>
<div class="t" style="left:1356.00px;top:947.51px;font-size:13.69px;line-height:13.69px;color:#5a5a5a;">leadership</div>
<div class="r" style="left:668.5px;top:916.8px;width:811.5px;height:1.7000000000000455px;background:#e0e0e0;"></div>
<div class="t" style="left:684.40px;top:986.11px;font-size:13.69px;line-height:13.69px;color:#5a5a5a;">Emma Roy</div>
<div class="t" style="left:824.40px;top:986.11px;font-size:13.69px;line-height:13.69px;color:#5a5a5a;">Frontend</div>
<div class="t" style="left:824.40px;top:1003.51px;font-size:13.69px;line-height:13.69px;color:#5a5a5a;">Engineer</div>
<div class="t" style="left:964.40px;top:986.11px;font-size:13.69px;line-height:13.69px;color:#5a5a5a;">3.8</div>
<div class="t" style="left:1104.20px;top:986.11px;font-size:13.69px;line-height:13.69px;color:#5a5a5a;">4/5</div>
<div class="t" style="left:1244.40px;top:986.11px;font-size:13.69px;line-height:13.69px;color:#5a5a5a;">9.0</div>
<div class="t" style="left:1356.00px;top:986.11px;font-size:13.69px;line-height:13.69px;color:#5a5a5a;">Fast learner, can</div>
<div class="t" style="left:1356.00px;top:1003.51px;font-size:13.69px;line-height:13.69px;color:#5a5a5a;">improve on</div>
<div class="t" style="left:1356.00px;top:1020.91px;font-size:13.69px;line-height:13.69px;color:#5a5a5a;">documentation</div>
<div class="r" style="left:668.5px;top:972.8px;width:811.5px;height:1.7000000000000455px;background:#e0e0e0;"></div></body></html>
